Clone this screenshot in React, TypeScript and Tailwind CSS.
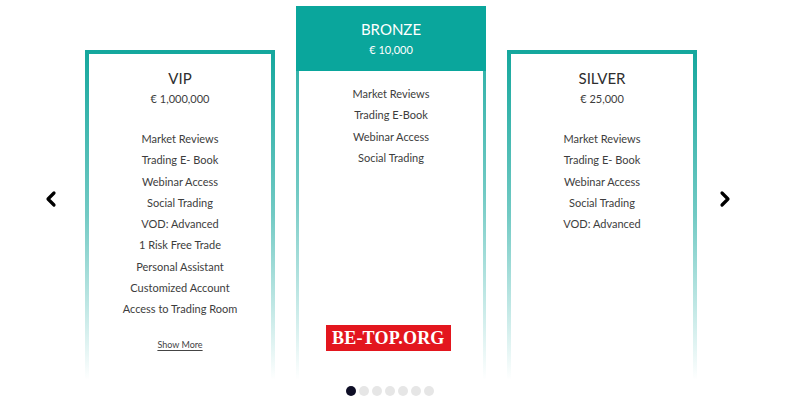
import { ChevronLeft, ChevronRight } from 'lucide-react'

const vip = [
  'Market Reviews',
  'Trading E- Book',
  'Webinar Access',
  'Social Trading',
  'VOD: Advanced',
  '1 Risk Free Trade',
  'Personal Assistant',
  'Customized Account',
  'Access to Trading Room',
]
const bronze = ['Market Reviews', 'Trading E-Book', 'Webinar Access', 'Social Trading']
const silver = ['Market Reviews', 'Trading E- Book', 'Webinar Access', 'Social Trading', 'VOD: Advanced']

function Features({ items }: { items: string[] }) {
  return (
    <ul className="flex flex-col items-center text-[11px] leading-[21.3px] text-[#3d3d3d]">
      {items.map((f) => (
        <li key={f}>{f}</li>
      ))}
    </ul>
  )
}

function Plan({ name, price, items, more }: { name: string; price: string; items: string[]; more?: boolean }) {
  return (
    <div className="mt-[50px] w-[190px] h-[330px] p-[4px] pb-0 bg-gradient-to-b from-[#14a79d] via-[#14a79d]/60 to-transparent">
      <div className="h-full bg-white flex flex-col items-center pt-[15px]">
        <div className="text-[15px] leading-[18px] text-[#2e2e2e]">{name}</div>
        <div className="mt-[4px] text-[11px] leading-[16px] text-[#3d3d3d]">{price}</div>
        <div className="mt-[21px]">
          <Features items={items} />
        </div>
        {more && (
          <a className="mt-[19px] text-[9px] leading-[12px] text-[#444] underline underline-offset-2">Show More</a>
        )}
      </div>
    </div>
  )
}

export default function App() {
  return (
    <div className="relative w-[800px] h-[411px] bg-white overflow-hidden" style={{ fontFamily: 'Lato, "Open Sans", sans-serif' }}>
      <div className="flex h-[380px] pl-[39px]">
        <button className="self-start mt-[187px] text-black">
          <ChevronLeft size={24} strokeWidth={3.2} />
        </button>
        <div className="flex items-start gap-[21px] ml-[22px]">
          <Plan name="VIP" price="€ 1,000,000" items={vip} more />
          <div className="mt-[6px] w-[190px] h-[374px] px-[3px] bg-gradient-to-b from-[#14a79d] via-[#14a79d]/60 to-transparent">
            <div className="h-full bg-white flex flex-col items-center">
              <div className="-mx-[3px] self-stretch h-[65px] bg-[#0aa69c] flex flex-col items-center pt-[14px] text-white">
                <div className="text-[15px] leading-[18px]">BRONZE</div>
                <div className="mt-[4px] text-[11px] leading-[16px]">€ 10,000</div>
              </div>
              <div className="mt-[12px]">
                <Features items={bronze} />
              </div>
            </div>
          </div>
          <Plan name="SILVER" price="€ 25,000" items={silver} />
        </div>
        <button className="self-start mt-[187px] ml-[16px] text-black">
          <ChevronRight size={24} strokeWidth={3.2} />
        </button>
      </div>
      <div className="absolute left-[326px] top-[325px] bg-[#e3161e] px-[6px] h-[26px] flex items-center">
        <span className="text-white font-bold text-[18px] tracking-[0.2px]" style={{ fontFamily: '"Liberation Serif", serif' }}>
          BE-TOP.ORG
        </span>
      </div>
      <div className="mt-[6px] flex justify-center gap-[3px] pr-[20px]">
        <span className="w-[10px] h-[10px] rounded-full bg-[#0e0e26]" />
        <span className="w-[10px] h-[10px] rounded-full bg-[#e6e6e6]" />
        <span className="w-[10px] h-[10px] rounded-full bg-[#e6e6e6]" />
        <span className="w-[10px] h-[10px] rounded-full bg-[#e6e6e6]" />
        <span className="w-[10px] h-[10px] rounded-full bg-[#e6e6e6]" />
        <span className="w-[10px] h-[10px] rounded-full bg-[#e6e6e6]" />
        <span className="w-[10px] h-[10px] rounded-full bg-[#e6e6e6]" />
      </div>
    </div>
  )
}
